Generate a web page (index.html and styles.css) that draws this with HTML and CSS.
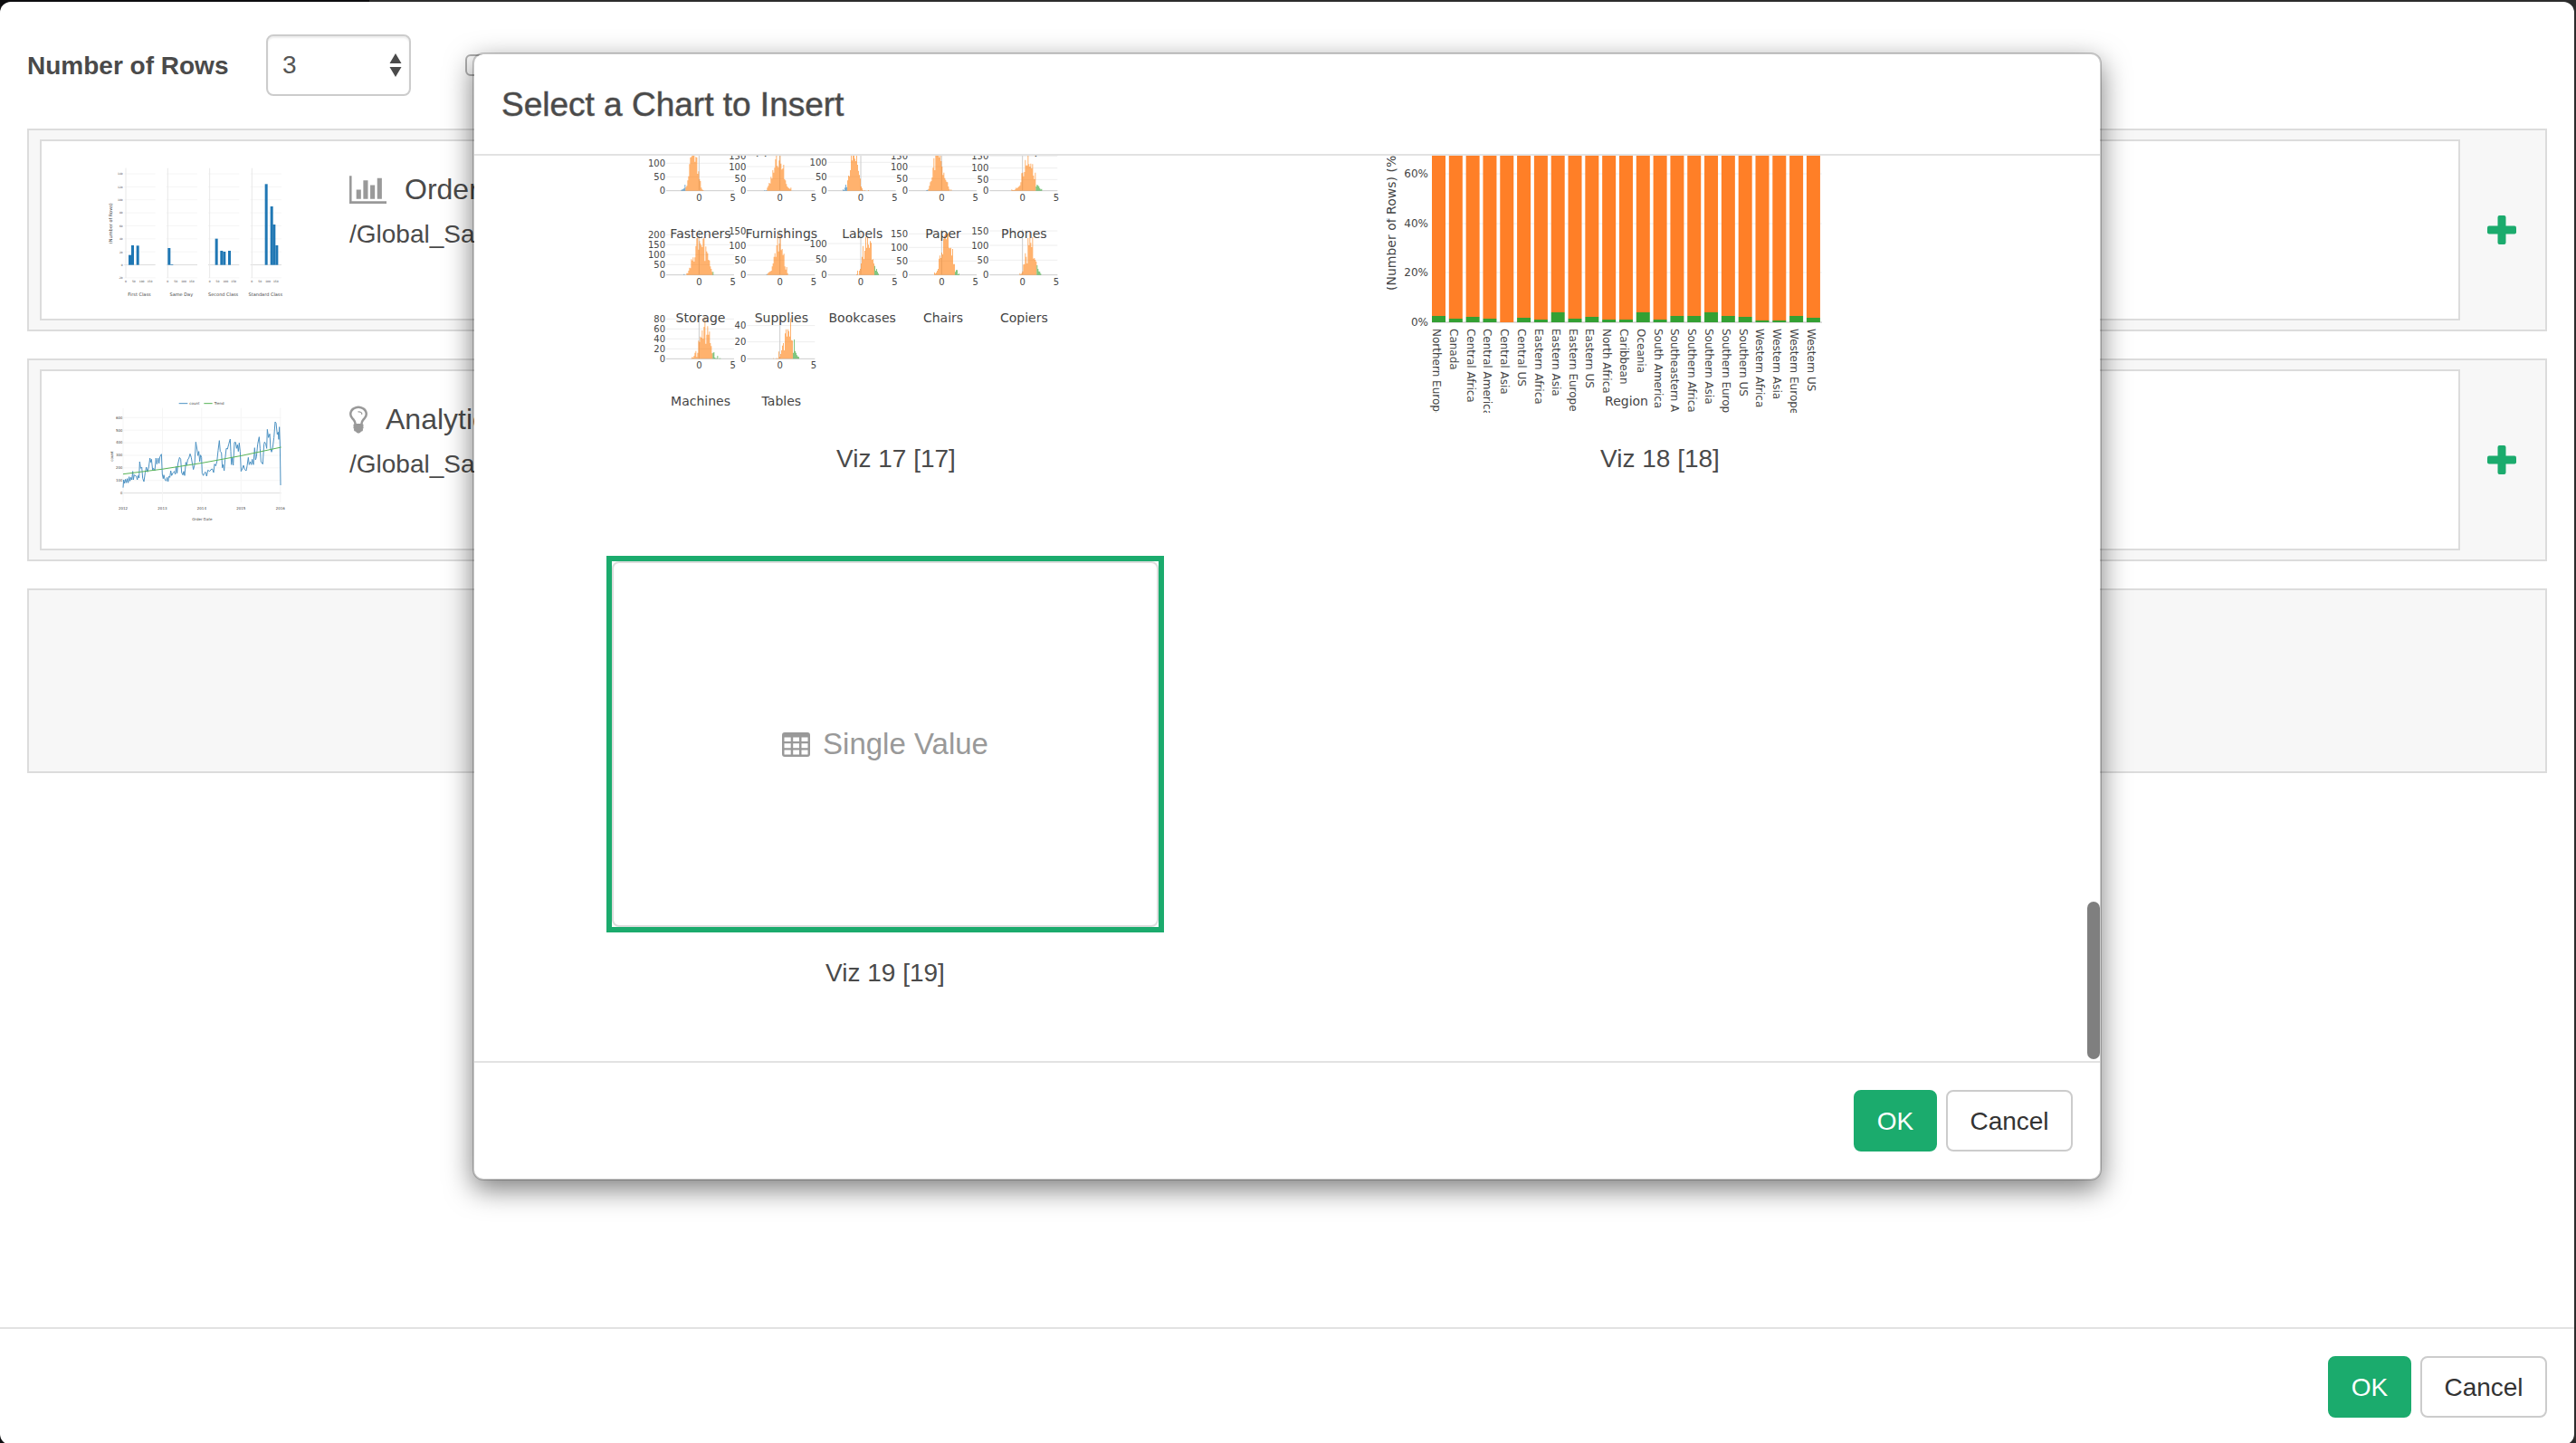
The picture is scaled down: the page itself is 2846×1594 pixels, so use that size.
FILE: index.html
```html
<!DOCTYPE html>
<html lang="en">
<head>
<meta charset="utf-8">
<title>Select a Chart to Insert</title>
<meta name="viewport" content="width=device-width, initial-scale=1">
<link rel="stylesheet" href="styles.css">
</head>
<body>
<main class="sheet">
  <div class="sheet-body">
    <form class="toolbar">
      <label class="toolbar-label" for="row-count">Number of Rows</label>
      <span class="select-wrap">
        <select class="select" id="row-count">
          <option>1</option>
          <option>2</option>
          <option selected>3</option>
          <option>4</option>
        </select>
        <svg class="select-arrows" viewBox="0 0 14 26" aria-hidden="true"><path d="M7 0l6.500 11H.5zM7 26L.5 15h13z"/></svg>
      </span>
      <input class="checkbox" type="checkbox" aria-label="Row option">
    </form>

    <section class="row">
      <article class="card">
        <svg class="thumb" id="thumb-bars" viewBox="0 0 230 170" role="img" aria-label="Number of rows by ship mode"></svg>
        <div class="card-text">
          <h2 class="card-title">
            <svg class="icon icon-chart" viewBox="0 128 2048 1536" aria-hidden="true"><path d="M640 896v512h-256v-512h256zm384-512v1024h-256v-1024h256zm1024 1152v128h-2048v-1536h128v1408h1920zm-640-896v768h-256v-768h256zm384-384v1152h-256v-1152h256z"/></svg>
            Orders
          </h2>
          <p class="card-path">/Global_Sales</p>
        </div>
      </article>
      <button class="add" type="button" aria-label="Add item">
        <svg class="icon-plus" viewBox="0 0 32 32" aria-hidden="true"><rect x="11.500" width="9" height="32" rx="2"/><rect y="11.500" width="32" height="9" rx="2"/></svg>
      </button>
    </section>

    <section class="row">
      <article class="card">
        <svg class="thumb" id="thumb-trend" viewBox="0 4 230 170" role="img" aria-label="Count by order date"></svg>
        <div class="card-text">
          <h2 class="card-title">
            <svg class="icon icon-bulb" viewBox="0 128 1024 1536" aria-hidden="true"><path d="M736 576q0 13-9.500 22.500t-22.500 9.500-22.500-9.500-9.500-22.500q0-46-54-71t-106-25q-13 0-22.500-9.500t-9.500-22.500 9.500-22.500 22.500-9.500q50 0 99.500 16t87 54 37.500 90zm160 0q0-72-34.500-134t-90-101.500-123-62-136.500-22.500-136.500 22.500-123 62-90 101.500-34.500 134q0 101 68 180 10 11 30.500 33t30.500 33q128 153 141 298h228q13-145 141-298 10-11 30.500-33t30.500-33q68-79 68-180zm128 0q0 155-103 268-45 49-74.500 87t-59.500 95.500-34 107.500q47 28 47 82 0 37-25 64 25 27 25 64 0 52-45 81 13 23 13 47 0 46-31.500 71t-77.500 25q-20 44-60 70t-87 26-87-26-60-70q-46 0-77.500-25t-31.500-71q0-24 13-47-45-29-45-81 0-37 25-64-25-27-25-64 0-54 47-82-4-50-34-107.500t-59.500-95.500-74.500-87q-103-113-103-268 0-99 44.500-184.500t117-142 164-89 186.500-32.500 186.500 32.500 164 89 117 142 44.500 184.500z"/></svg>
            Analytics
          </h2>
          <p class="card-path">/Global_Sales</p>
        </div>
      </article>
      <button class="add" type="button" aria-label="Add item">
        <svg class="icon-plus" viewBox="0 0 32 32" aria-hidden="true"><rect x="11.500" width="9" height="32" rx="2"/><rect y="11.500" width="32" height="9" rx="2"/></svg>
      </button>
    </section>

    <section class="row row-empty"></section>
  </div>

  <footer class="actions">
    <button class="btn btn-primary" type="button">OK</button>
    <button class="btn" type="button">Cancel</button>
  </footer>

  <div class="modal" role="dialog" aria-labelledby="modal-title">
    <header class="modal-header">
      <h1 class="modal-title" id="modal-title">Select a Chart to Insert</h1>
    </header>
    <div class="modal-body">
      <div class="gallery">
        <figure class="tile">
          <svg class="tile-frame" id="viz-17" viewBox="0 0 604 404" role="img" aria-label="Viz 17"></svg>
          <figcaption class="tile-caption">Viz 17 [17]</figcaption>
        </figure>
        <figure class="tile">
          <svg class="tile-frame" id="viz-18" viewBox="0 0 604 404" role="img" aria-label="Viz 18"></svg>
          <figcaption class="tile-caption">Viz 18 [18]</figcaption>
        </figure>
        <figure class="tile tile-selected">
          <div class="tile-frame">
            <div class="placeholder">
              <svg class="icon-table" viewBox="0 0 31 27" aria-hidden="true"><path fill-rule="evenodd" d="M3 0h25a3 3 0 0 1 3 3v21a3 3 0 0 1-3 3H3a3 3 0 0 1-3-3V3a3 3 0 0 1 3-3zM2.500 5.500V10h7.200V5.500zM12.200 5.500V10h6.800V5.500zM21.500 5.500V10h7V5.500zM2.500 12.300v5h7.200v-5zM12.200 12.300v5h6.800v-5zM21.500 12.300v5h7v-5zM2.500 19.600v4.800h7.200v-4.800zM12.200 19.600v4.800h6.800v-4.800zM21.500 19.600v4.800h7v-4.800z"/></svg>
              Single Value
            </div>
          </div>
          <figcaption class="tile-caption">Viz 19 [19]</figcaption>
        </figure>
      </div>
      <div class="scroll-thumb"></div>
    </div>
    <footer class="actions">
      <button class="btn btn-primary" type="button">OK</button>
      <button class="btn" type="button">Cancel</button>
    </footer>
  </div>
</main>
<script src="charts.js"></script>
</body>
</html>
```
FILE: styles.css
```css
* {
  box-sizing: border-box;
}

body {
  margin: 0;
  height: 100vh;
  overflow: hidden;
  background: linear-gradient(to right, #0d0d0f 408px, #2c2c2c 408px);
  color: #4a4a4a;
  font-family: "Helvetica Neue", "Liberation Sans", Arial, sans-serif;
  font-size: 28px;
  line-height: 40px;
}

h1, h2, p, figure {
  margin: 0;
  font-weight: normal;
}

.sheet {
  position: relative;
  display: flex;
  flex-direction: column;
  height: 100vh;
  margin: 2px 2px 0 0;
  border-radius: 12px;
  background: #fff;
}

.sheet-body {
  flex: 1;
  display: flex;
  flex-direction: column;
  gap: 30px;
  padding: 36px 30px;
}

.toolbar {
  display: flex;
  align-items: center;
  margin-bottom: 6px;
}

.toolbar-label {
  margin-right: 40px;
  min-width: 224px;
  padding-top: 2px;
  font-weight: bold;
}

.select-wrap {
  position: relative;
  margin-right: 60px;
}

.select {
  display: block;
  width: 160px;
  height: 68px;
  padding: 0 16px;
  border: 2px solid #ccc;
  border-radius: 8px;
  background: #fff;
  box-shadow: inset 0 2px 2px rgba(0, 0, 0, .075);
  color: #555;
  font: inherit;
  appearance: none;
}

.select-arrows {
  position: absolute;
  top: 21px;
  right: 10px;
  width: 14px;
  height: 26px;
  fill: #4a4a4a;
}

.checkbox {
  width: 24px;
  height: 24px;
  margin: 0;
  border: 2px solid #b0b0b0;
  border-radius: 6px;
  background: #fff;
  appearance: none;
}

.row {
  display: flex;
  padding: 10px 0 10px 12px;
  border: 2px solid #dcdcdc;
  background: #f7f7f7;
}

.row-empty {
  height: 204px;
}

.card {
  flex: 1;
  display: flex;
  gap: 56px;
  height: 200px;
  padding: 14px 54px;
  border: 2px solid #dcdcdc;
  background: #fff;
}

.thumb {
  flex: none;
  width: 230px;
  height: 170px;
}

.card-text {
  padding-top: 19px;
}

.card-title {
  display: flex;
  align-items: center;
  gap: 20px;
  margin-bottom: 10px;
  font-size: 32px;
}

.icon {
  height: 31px;
  fill: #999;
}

.icon-chart {
  width: 41px;
}

.icon-bulb {
  width: 20px;
}

.add {
  display: flex;
  align-items: center;
  justify-content: center;
  width: 94px;
  padding: 0 2px 0 0;
  border: 0;
  background: none;
}

.icon-plus {
  width: 32px;
  height: 32px;
  fill: #1bab6d;
}

.actions {
  display: flex;
  justify-content: flex-end;
  gap: 10px;
  padding: 30px;
  border-top: 2px solid #e2e2e2;
}

.btn {
  min-width: 140px;
  height: 68px;
  padding: 2px 20px 0;
  border: 2px solid #ccc;
  border-radius: 8px;
  background: #fff;
  color: #333;
  font: inherit;
}

.btn-primary {
  min-width: 92px;
  border-color: #1bab6d;
  background: #1bab6d;
  color: #fff;
}

/* Chart picker */
.modal {
  position: absolute;
  top: 56px;
  left: 0;
  right: 0;
  width: min(1800px, 100% - 60px);
  margin: 0 auto;
  border: 2px solid rgba(0, 0, 0, .2);
  border-radius: 12px;
  background: #fff;
  background-clip: padding-box;
  box-shadow: 0 10px 30px rgba(0, 0, 0, .5);
}

.modal-header {
  padding: 36px 30px 34px;
  border-bottom: 2px solid #e2e2e2;
}

.modal-title {
  font-size: 37px;
  -webkit-text-stroke: 1px rgba(74, 74, 74, .5);
}

.modal-body {
  position: relative;
  display: flex;
  flex-direction: column;
  justify-content: flex-end;
  height: calc(100vh - 594px);
  padding: 0 64px 77px 44px;
  overflow: hidden;
}

.gallery {
  flex: none;
  display: grid;
  grid-template-columns: 1fr 1fr;
  row-gap: 87px;
}

.tile {
  display: flex;
  flex-direction: column;
  align-items: center;
  gap: 25px;
}

.tile-frame {
  width: 616px;
  height: 416px;
  padding: 6px;
  overflow: hidden;
}

.tile-selected {
  margin-right: 24px;
}

.tile-selected .tile-frame {
  padding: 0;
  border: 6px solid #1bab6d;
}

.placeholder {
  display: flex;
  align-items: center;
  justify-content: center;
  gap: 14px;
  height: 100%;
  border: 2px solid #ddd;
  border-radius: 8px;
  color: #999;
  font-size: 33px;
}

.icon-table {
  width: 31px;
  height: 27px;
  fill: #999;
}

.scroll-thumb {
  position: absolute;
  right: 0;
  bottom: 2px;
  width: 14px;
  height: 174px;
  border-radius: 7px;
  background: #7f7f7f;
}

/* Charts */
svg text {
  font-family: Verdana, "DejaVu Sans", sans-serif;
  fill: #444;
}

.t3 { font-size: 3px; }
.t4 { font-size: 4px; }
.t5 { font-size: 5px; }
.t10 { font-size: 10px; }
.t12 { font-size: 12px; }
.t14 { font-size: 14px; }
```
FILE: charts.js
```js
const NS = 'http://www.w3.org/2000/svg';
const BLUE = '#1f77b4', ORANGE = '#ff7f0e', GREEN = '#2ca02c';

function add(svg, tag, attrs, text) {
  const el = document.createElementNS(NS, tag);
  for (const k in attrs) el.setAttribute(k, attrs[k]);
  if (text !== undefined) el.textContent = text;
  svg.appendChild(el);
  return el;
}
function label(svg, x, y, text, cls, anchor, angle) {
  const a = { x, y, class: cls, 'text-anchor': anchor || 'start' };
  if (angle) a.transform = `rotate(${angle} ${x} ${y})`;
  add(svg, 'text', a, text);
}
function line(svg, x1, y1, x2, y2, color, width) {
  add(svg, 'path', { d: `M${x1} ${y1}L${x2} ${y2}`, stroke: color, 'stroke-width': width, fill: 'none' });
}

/* Small multiples of histograms. Lengths are in thirds of a pixel. */
(function () {
  const svg = document.getElementById('viz-17');
  const X = v => v / 3 - 8, Y = v => v / 3 + 98;
  const zeros = [277, 545, 813, 1081, 1349], bases = [182, 461, 739];
  const t = (...v) => v;
  const plots = [
    [0, 0, { 100: 91, 50: 136 }, -60, t(3, 4, 6, 8, 20), t(12, 16, 34, 48, 88, 110, 112, 118, 118, 118, 96, 112, 110, 56, 64, 38, 32, 10, 4, 2), []],
    [0, 1, { 150: 66, 100: 102, 50: 142 }, -52, t(2, 0, 2), t(10, 16, 26, 24, 46, 40, 68, 60, 76, 104, 118, 82, 78, 100, 118, 90, 70, 74, 86, 38, 34, 22, 14, 10, 8, 6, 10), []],
    [0, 2, { 100: 88, 50: 135 }, -60, t(4, 2, 10, 20, 12), t(34, 50, 48, 68, 118, 100, 118, 118, 106, 98, 118, 86, 66, 52, 40, 14, 8, 2, 0, 2, 0, 0, 0, 2), []],
    [0, 3, { 150: 66, 100: 102, 50: 142 }, -51, t(2, 3), t(6, 16, 28, 32, 44, 76, 108, 68, 118, 118, 116, 118, 110, 118, 98, 80, 52, 60, 42, 36, 30, 28, 14, 6, 0, 4), []],
    [0, 4, { 150: 68, 100: 107, 50: 145 }, -37, [], t(4, 2, 2, 2, 6, 10, 8, 12, 14, 18, 28, 58, 60, 48, 62, 102, 84, 84, 118, 88, 80, 90, 74, 88, 50, 38, 60), t(14, 20, 18, 14, 8, 4, 6)],
    [1, 0, { 200: 328, 150: 361, 100: 394, 50: 427 }, -51, t(3, 0, 0), t(6, 6, 14, 24, 22, 52, 48, 58, 44, 58, 96, 122, 124, 84, 112, 104, 98, 92, 120, 124, 46, 94, 78, 72, 50, 48, 28, 20, 10), t(10)],
    [1, 1, { 150: 315, 100: 363, 50: 412 }, -45, t(3), t(4, 8, 10, 12, 14, 28, 38, 60, 72, 60, 98, 134, 78, 104, 132, 82, 86, 66, 70, 28, 18, 26, 6), []],
    [1, 2, { 100: 357, 50: 409 }, -15, [], t(2, 14, 0, 14, 20, 38, 60, 96, 52, 80, 126, 90, 126, 100, 90, 112, 106, 50, 52, 38), t(30, 14, 20, 10, 4)],
    [1, 3, { 150: 325, 100: 370, 50: 415 }, -25, [], t(8, 4, 8, 14, 20, 54, 64, 56, 74, 68, 120, 130, 136, 118, 138, 138, 90, 88, 90, 64, 86, 36, 36), t(10, 16, 16, 2, 4)],
    [1, 4, { 150: 315, 100: 363, 50: 412 }, -10, [], t(6, 2, 6, 12, 34, 36, 72, 60, 38, 122, 98, 140, 106, 92, 126, 54, 56, 50, 44), t(32, 20, 12, 10, 4)],
    [2, 0, { 80: 607, 60: 640, 40: 673, 20: 706 }, -27, [], t(2, 6, 4, 10, 20, 26, 6, 20, 60, 56, 74, 70, 94, 66, 106, 140, 50, 80, 108, 80, 90, 52, 42, 18), t(20, 22, 4, 2, 2, 10, 0, 2, 2)],
    [2, 1, { 40: 629, 20: 683 }, -23, [], t(2, 0, 0, 2, 2, 2, 24, 6, 16, 28, 44, 52, 28, 84, 98, 74, 98, 92, 74, 134, 62, 60), t(20, 64, 26, 20, 12, 8, 6)]
  ];
  for (const [r, c, ticks, start, lo, mid, hi] of plots) {
    const z = zeros[c], b = bases[r];
    for (const k of Object.keys(ticks).sort((p, q) => q - p)) {
      line(svg, X(z - 109), Y(ticks[k]), X(z + 116), Y(ticks[k]), '#eee', 1);
      label(svg, X(z - 112), Y(ticks[k] + 11), k, 't10', 'end');
    }
    label(svg, X(z - 112), Y(b + 10), '0', 't10', 'end');
    line(svg, X(z), Y(b - 150), X(z), Y(b), '#ccc', 1);
    line(svg, X(z - 109), Y(b), X(z + 116), Y(b), '#ccc', 1);
    let x = z + start;
    for (const [bins, color] of [[lo, BLUE], [mid, ORANGE], [hi, GREEN]]) {
      if (!bins.length) continue;
      let d = `M${X(x)} ${Y(b)}`;
      for (const h of bins) { d += `V${Y(b - h)}`; x += 3; d += `H${X(x)}`; }
      add(svg, 'path', { d: d + `V${Y(b)}Z`, fill: color, 'fill-opacity': .6 });
    }
    label(svg, X(z), Y(b + 33), '0', 't10', 'middle');
    label(svg, X(z + 112), Y(b + 33), '5', 't10', 'middle');
  }
  const names = [['Accessories', 'Appliances', 'Art', 'Binders', 'Envelopes'],
    ['Fasteners', 'Furnishings', 'Labels', 'Paper', 'Phones'],
    ['Storage', 'Supplies', 'Bookcases', 'Chairs', 'Copiers'], ['Machines', 'Tables']];
  names.forEach((row, r) => row.forEach((n, c) =>
    label(svg, X(zeros[c] + 5), Y(61 + r * 278), n, 't14', 'middle')));
})();

/* Stacked share per region */
(function () {
  const svg = document.getElementById('viz-18');
  const regions = [['Northern Europe', 7], ['Canada', 4], ['Central Africa', 6], ['Central America', 4],
    ['Central Asia', 0], ['Central US', 5], ['Eastern Africa', 3], ['Eastern Asia', 11], ['Eastern Europe', 4],
    ['Eastern US', 6], ['North Africa', 3], ['Caribbean', 3], ['Oceania', 11], ['South America', 3],
    ['Southeastern Asia', 7], ['Southern Africa', 7], ['Southern Asia', 11], ['Southern Europe', 7],
    ['Southern US', 6], ['Western Africa', 2], ['Western Asia', 2], ['Western Europe', 7], ['Western US', 5]];
  const base = 304;
  [0, 20, 40, 60].forEach(p => {
    const y = Math.round(base - p * 2.735);
    line(svg, 50, y, 481, y, p ? '#eee' : '#ddd', p ? 1 : 2);
    label(svg, 46, y + 4, p + '%', 't12', 'end');
  });
  regions.forEach(([name, h], i) => {
    const x = 50 + i * 18.815;
    add(svg, 'rect', { x, y: 31, width: 15, height: base - 31 - h, fill: '#ff7f27' });
    add(svg, 'rect', { x, y: base - h, width: 15, height: h, fill: '#33a033' });
    label(svg, x + 1, 311, name, 't12', 'start', 90);
  });
  label(svg, 10, 269, '(Number of Rows) (%)', 't14', 'start', -90);
  label(svg, 265, 396, 'Region', 't14', 'middle');
})();

/* Card thumbnail: bars by ship mode */
(function () {
  const svg = document.getElementById('thumb-bars'), s = v => v / 3;
  const groups = [
    ['First Class', 117, [[126, 335], [135, 303], [152, 304]]],
    ['Same Day', 256, [[256, 312], [265, 366]]],
    ['Second Class', 395, [[413, 281], [430, 321], [439, 324], [456, 321]]],
    ['Standard Class', 535, [[578, 100], [596, 174], [604, 234], [613, 303]]]
  ];
  ['14k', '12k', '10k', '8k', '6k', '4k', '2k', '0', '-2k'].forEach((t, i) => {
    const y = 66 + i * 43.1;
    label(svg, s(107), s(y + 4), t, 't3', 'end');
    groups.forEach(g => line(svg, s(g[1] - 5), s(y), s(g[1] + 98), s(y), t === '0' ? '#ddd' : '#f5f5f5', 1));
  });
  groups.forEach(([name, z, bars]) => {
    line(svg, s(z), s(47), s(z), s(411), '#e8e8e8', 1);
    bars.forEach(([x, y]) => add(svg, 'rect', { x: s(x), y: s(y), width: 3, height: s(368 - y), fill: BLUE }));
    [0, 50, 100, 150].forEach((t, i) => label(svg, s(z + i * 26.5), s(425), t, 't3', 'middle'));
    label(svg, s(z + 45), s(470), name, 't5', 'middle');
  });
  label(svg, s(71), s(230), '(Number of Rows)', 't5', 'middle', -90);
})();

/* Card thumbnail: count over time with a trend line */
(function () {
  const svg = document.getElementById('thumb-trend'), s = v => v / 3;
  for (let i = 0; i <= 6; i++) {
    const y = 374 - i * 41.7;
    line(svg, s(108), s(y), s(632), s(y), i ? '#f5f5f5' : '#ddd', 1);
    label(svg, s(107), s(y + 4), i * 100, 't4', 'end');
  }
  for (let i = 0; i <= 4; i++) {
    const x = 108 + i * 130.3;
    line(svg, s(x), s(92), s(x), s(405), '#f5f5f5', 1);
    label(svg, s(x), s(428), 2012 + i, 't4', 'middle');
  }
  const pts = [108,356,110,330,113,342,116,328,119,340,122,326,125,340,128,320,131,334,134,322,137,330,140,302,142,330,
    145,314,152,318,155,330,158,316,161,324,163,270,166,292,170,288,173,325,177,336,181,308,185,288,189,304,193,288,
    197,258,199,272,202,262,206,298,209,292,213,300,217,258,220,278,224,258,227,276,230,254,235,245,238,312,241,326,
    243,314,247,330,251,334,254,322,257,336,260,318,263,322,266,300,269,316,273,308,278,302,281,312,284,286,287,308,
    290,276,295,256,299,262,302,306,306,314,309,302,312,316,316,272,319,282,322,264,326,258,330,244,334,256,338,280,
    341,296,345,280,349,205,353,228,356,250,359,236,362,270,365,248,368,256,370,308,374,316,377,308,381,304,385,318,
    389,298,395,302,399,296,404,294,408,306,411,278,415,284,419,270,423,232,427,200,430,236,434,240,437,290,440,280,
    443,300,446,262,450,226,454,228,458,212,463,195,465,236,467,280,470,256,473,282,477,206,481,206,484,226,487,214,
    490,236,493,208,496,236,499,302,503,294,507,282,511,296,516,300,519,284,523,256,526,280,530,270,533,280,536,262,
    540,280,544,224,547,264,550,254,554,212,559,188,562,226,565,270,571,278,575,212,577,205,581,212,584,226,586,163,
    590,190,594,178,597,228,600,238,604,222,608,190,612,138,615,142,619,180,622,172,624,196,626,155,628,210,630,348];
  let d = 'M';
  for (let i = 0; i < pts.length; i += 2) d += s(pts[i]) + ' ' + s(pts[i + 1]) + ' ';
  add(svg, 'path', { d, stroke: '#4c92c3', 'stroke-width': 1, fill: 'none', 'stroke-linejoin': 'round' });
  add(svg, 'path', { d: 'M36 103.700Q123 94 210.700 74', stroke: '#56b356', 'stroke-width': 1, fill: 'none' });
  line(svg, s(293), s(77), s(322), s(77), '#4c92c3', 1);
  line(svg, s(376), s(77), s(404), s(77), '#56b356', 1);
  label(svg, s(328), s(81), 'count', 't4');
  label(svg, s(410), s(81), 'Trend', 't4');
  label(svg, s(370), s(465), 'Order Date', 't4', 'middle');
  label(svg, s(75), s(252), 'count', 't4', 'middle', -90);
})();
```
